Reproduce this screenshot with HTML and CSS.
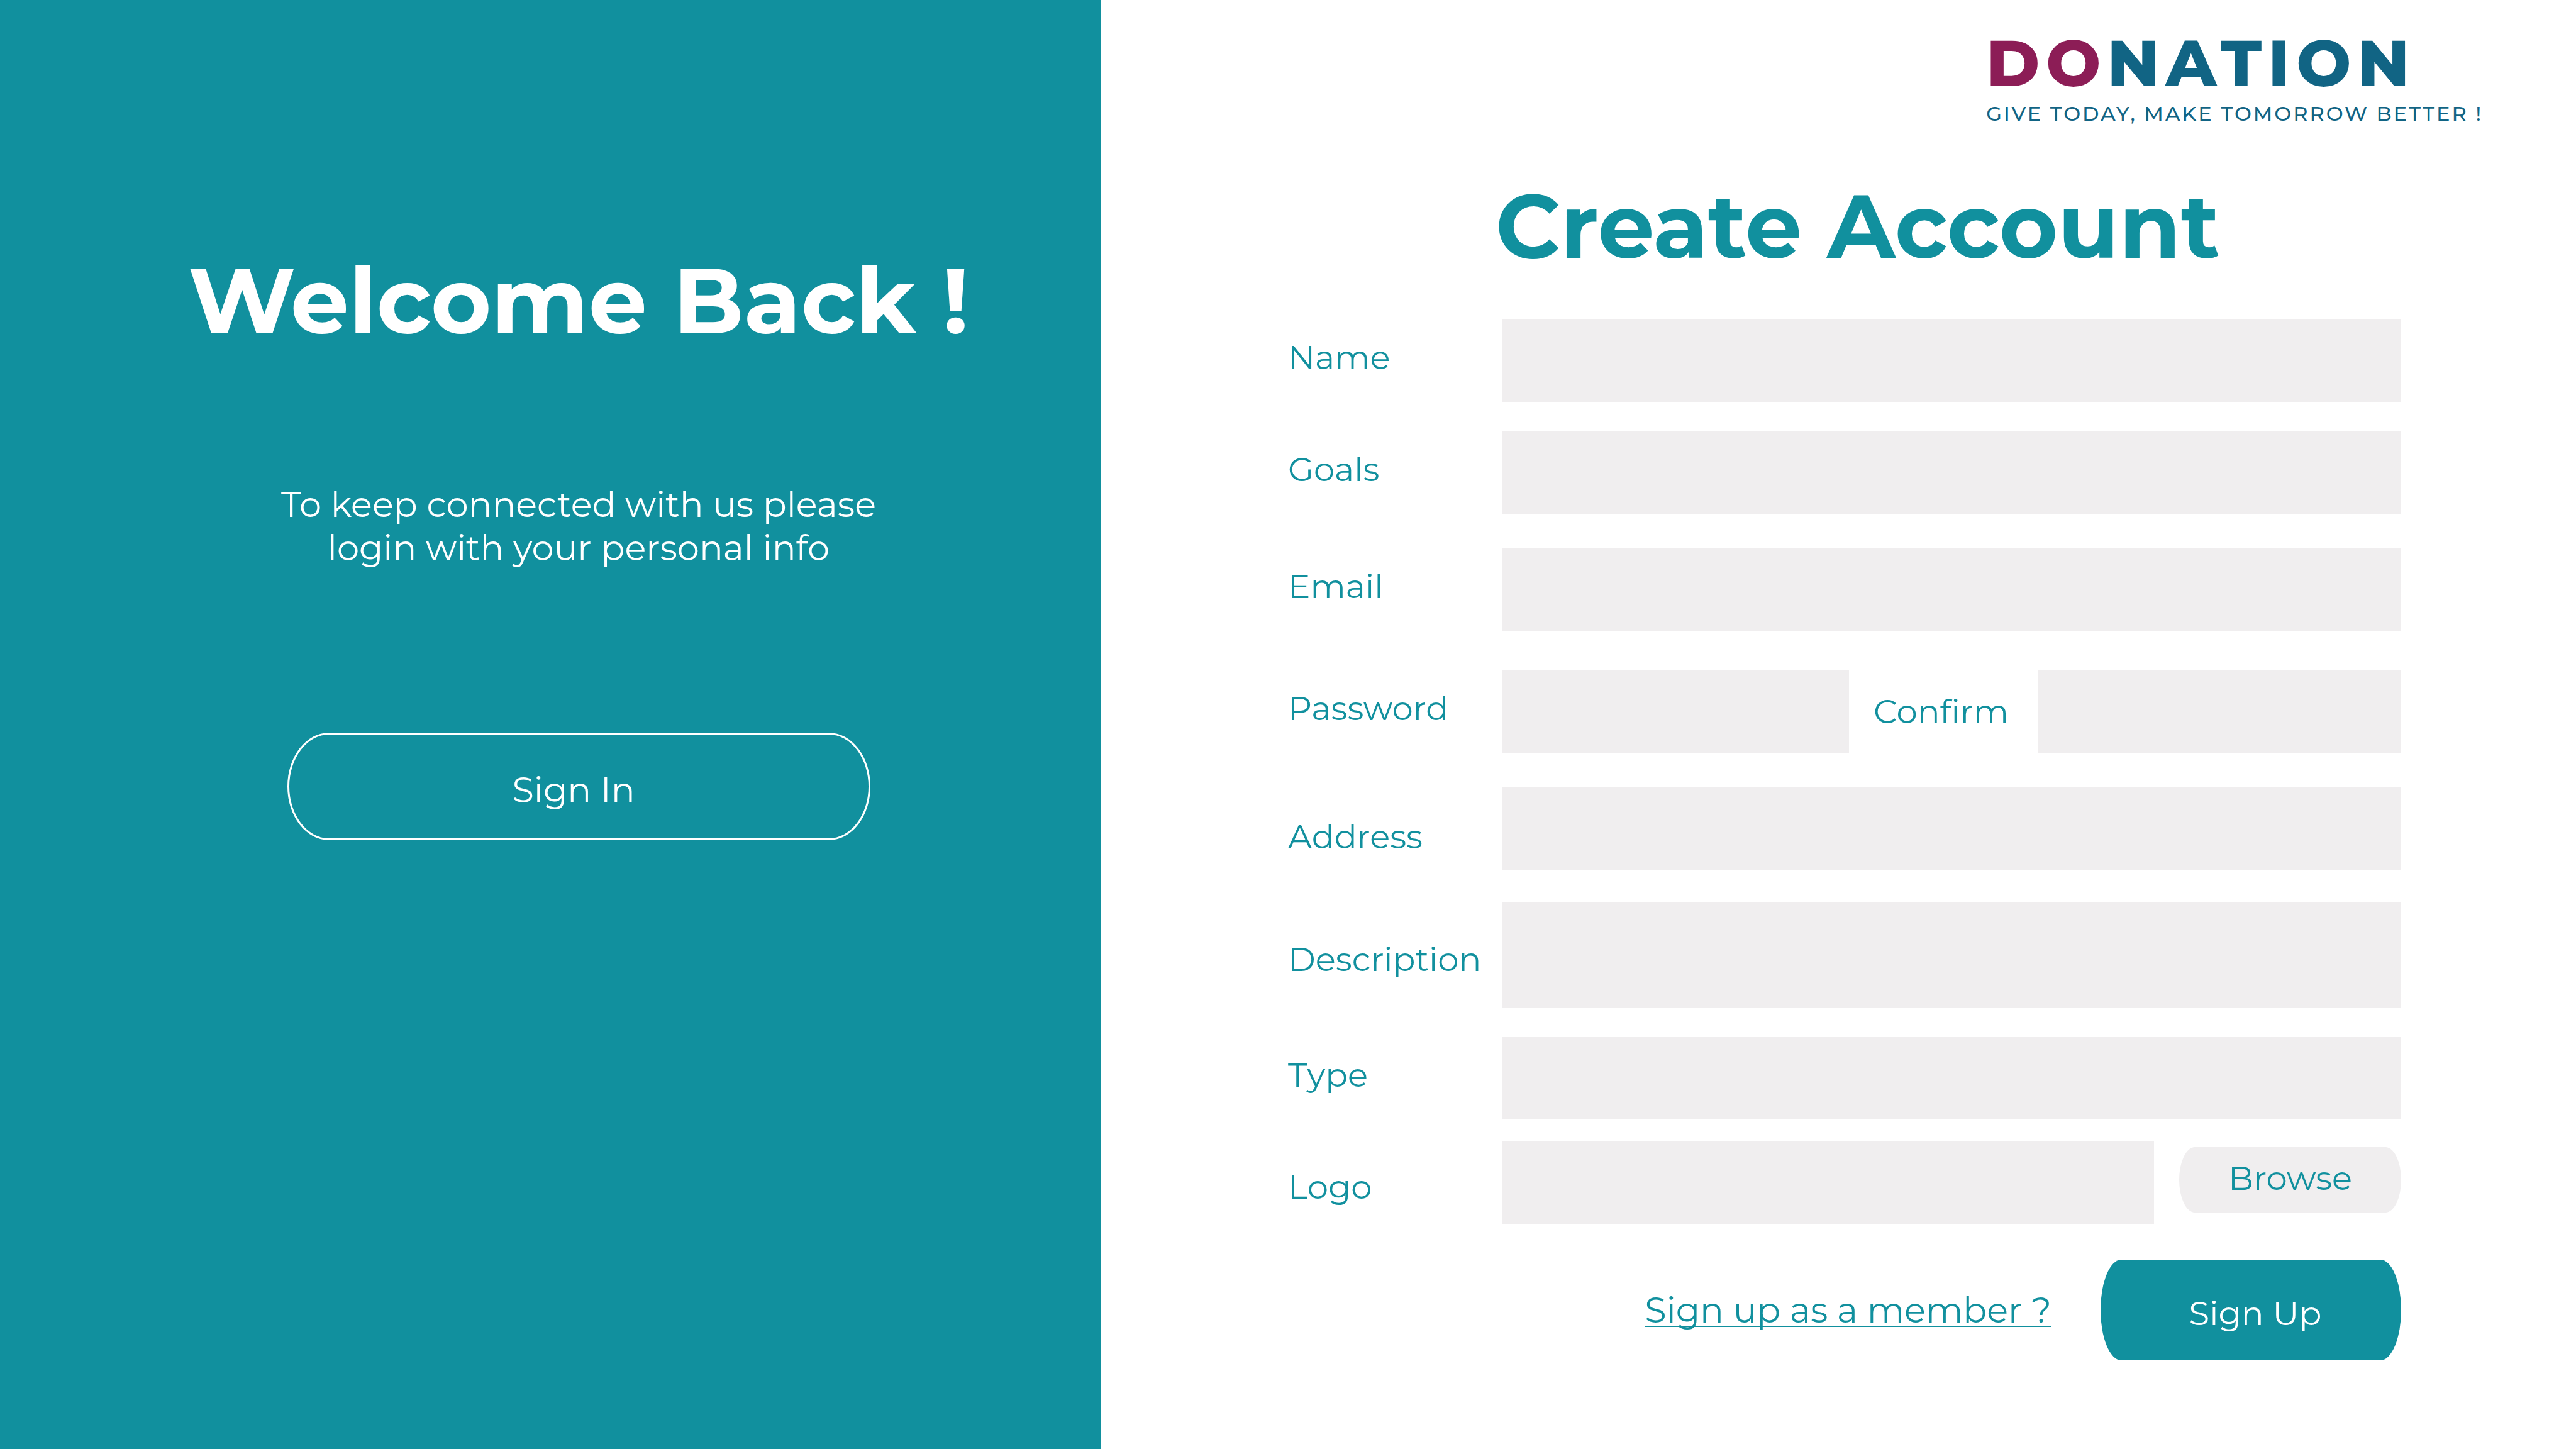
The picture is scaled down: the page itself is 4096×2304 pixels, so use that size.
FILE: index.html
```html
<!DOCTYPE html>
<html lang="en">
<head>
  <meta charset="utf-8">
  <meta name="viewport" content="width=device-width, initial-scale=1">
  <title>Donation - Create Account</title>
  <link rel="stylesheet" href="styles.css">
</head>
<body>
  <div class="page">
    <aside class="welcome">
      <h2 class="welcome-title">Welcome Back !</h2>
      <p class="welcome-text">To keep connected with us please<br>login with your personal info</p>
      <button class="sign-in" type="button">Sign In</button>
    </aside>

    <main class="register">
      <header class="brand">
        <div class="brand-name"><span class="brand-accent">DO</span>NATION</div>
        <div class="brand-tagline">GIVE TODAY, MAKE TOMORROW BETTER !</div>
      </header>

      <h1 class="title">Create Account</h1>

      <form class="form">
        <div class="row">
          <label class="label" for="name">Name</label>
          <input class="field" id="name" type="text">
        </div>
        <div class="row row-goals">
          <label class="label" for="goals">Goals</label>
          <input class="field" id="goals" type="text">
        </div>
        <div class="row row-email">
          <label class="label" for="email">Email</label>
          <input class="field" id="email" type="email">
        </div>
        <div class="row row-password">
          <label class="label" for="password">Password</label>
          <div class="pair">
            <input class="field" id="password" type="password">
            <label class="label-confirm" for="confirm">Confirm</label>
            <input class="field" id="confirm" type="password">
          </div>
        </div>
        <div class="row row-address">
          <label class="label label-lower" for="address">Address</label>
          <input class="field" id="address" type="text">
        </div>
        <div class="row row-description">
          <label class="label label-low" for="description">Description</label>
          <textarea class="field field-tall" id="description"></textarea>
        </div>
        <div class="row row-type">
          <label class="label" for="type">Type</label>
          <input class="field" id="type" type="text">
        </div>
        <div class="row row-logo">
          <label class="label label-low" for="logo">Logo</label>
          <div class="upload">
            <input class="field" id="logo" type="text">
            <button class="browse" type="button">Browse</button>
          </div>
        </div>
        <div class="actions">
          <a class="member-link" href="#member">Sign up as a member ?</a>
          <button class="sign-up" type="submit">Sign Up</button>
        </div>
      </form>
    </main>
  </div>
</body>
</html>
```
FILE: styles.css
```css
:root {
  --teal: #11909e;
  --blue: #116484;
  --plum: #8c1d56;
  --field: #f0eeef;
}

* {
  box-sizing: border-box;
}

body {
  margin: 0;
  background: #fff;
  color: var(--teal);
  font-family: Montserrat, Inter, "Open Sans", sans-serif;
  font-size: 53px;
  font-weight: 400;
  line-height: 69px;
}

h1,
h2,
p {
  margin: 0;
}

button,
input,
textarea {
  margin: 0;
  border: 0;
  color: inherit;
  font: inherit;
}

button {
  cursor: pointer;
}

.page {
  display: grid;
  grid-template-columns: 1750fr 2346fr;
  min-height: 100vh;
}

/* Sign-in panel */

.welcome {
  display: flex;
  flex-direction: column;
  align-items: center;
  padding: 388px 0 0 90px;
  background: var(--teal);
  color: #fff;
  text-align: center;
}

.welcome-title {
  font-size: 147px;
  font-weight: 700;
  line-height: 180px;
}

.welcome-text {
  margin-top: 200px;
  font-size: 56px;
}

.sign-in {
  width: 927px;
  height: 171px;
  margin-top: 259px;
  padding: 12px 16px 0 0;
  border: 3px solid #fff;
  border-radius: 66px / 50%;
  background: transparent;
  font-size: 56px;
}

/* Registration panel */

.register {
  display: flex;
  flex-direction: column;
  padding: 50px 278px 140px 298px;
}

.brand {
  align-self: flex-end;
  margin-right: -130px;
  color: var(--blue);
}

.brand-name {
  font-size: 103px;
  font-weight: 800;
  letter-spacing: 10px;
  line-height: 100px;
}

.brand-accent {
  color: var(--plum);
}

.brand-tagline {
  margin-top: 10px;
  font-size: 32px;
  font-weight: 500;
  letter-spacing: 3px;
  line-height: 42px;
  white-space: nowrap;
}

.title {
  margin: 68px 0 0 330px;
  font-size: 142px;
  font-weight: 700;
  line-height: 180px;
  white-space: nowrap;
}

.form {
  margin-top: 58px;
}

.row {
  display: grid;
  grid-template-columns: 340px 1fr;
}

.row-goals,
.row-type {
  margin-top: 47px;
}

.row-email,
.row-address {
  margin-top: 55px;
}

.row-password {
  margin-top: 63px;
}

.row-description {
  margin-top: 51px;
}

.row-logo {
  margin-top: 35px;
}

.label {
  align-self: center;
  padding-bottom: 10px;
}

.label-low {
  padding: 14px 0 0;
}

.label-lower {
  padding: 26px 0 0;
}

.field {
  display: block;
  width: 100%;
  min-width: 0;
  height: 131px;
  padding: 0 32px;
  border-radius: 0;
  background: var(--field);
}

.field-tall {
  height: 168px;
  padding: 32px;
  resize: none;
}

.pair {
  display: grid;
  grid-template-columns: 552fr 300px 579fr;
  align-items: center;
}

.label-confirm {
  padding-right: 6px;
  text-align: center;
}

.upload {
  display: grid;
  grid-template-columns: 1fr 353px;
  column-gap: 40px;
}

.browse {
  height: 104px;
  margin-top: 9px;
  padding-bottom: 6px;
  border-radius: 25px / 50%;
  background: var(--field);
}

.actions {
  display: flex;
  justify-content: flex-end;
  align-items: center;
  gap: 78px;
  margin-top: 57px;
}

.member-link {
  color: inherit;
  font-size: 56px;
  text-decoration: underline 1px;
  text-underline-offset: 6px;
  text-decoration-skip-ink: none;
}

.sign-up {
  width: 478px;
  height: 160px;
  padding: 10px 0 0 14px;
  border-radius: 33px / 50%;
  background: var(--teal);
  color: #fff;
}
```
